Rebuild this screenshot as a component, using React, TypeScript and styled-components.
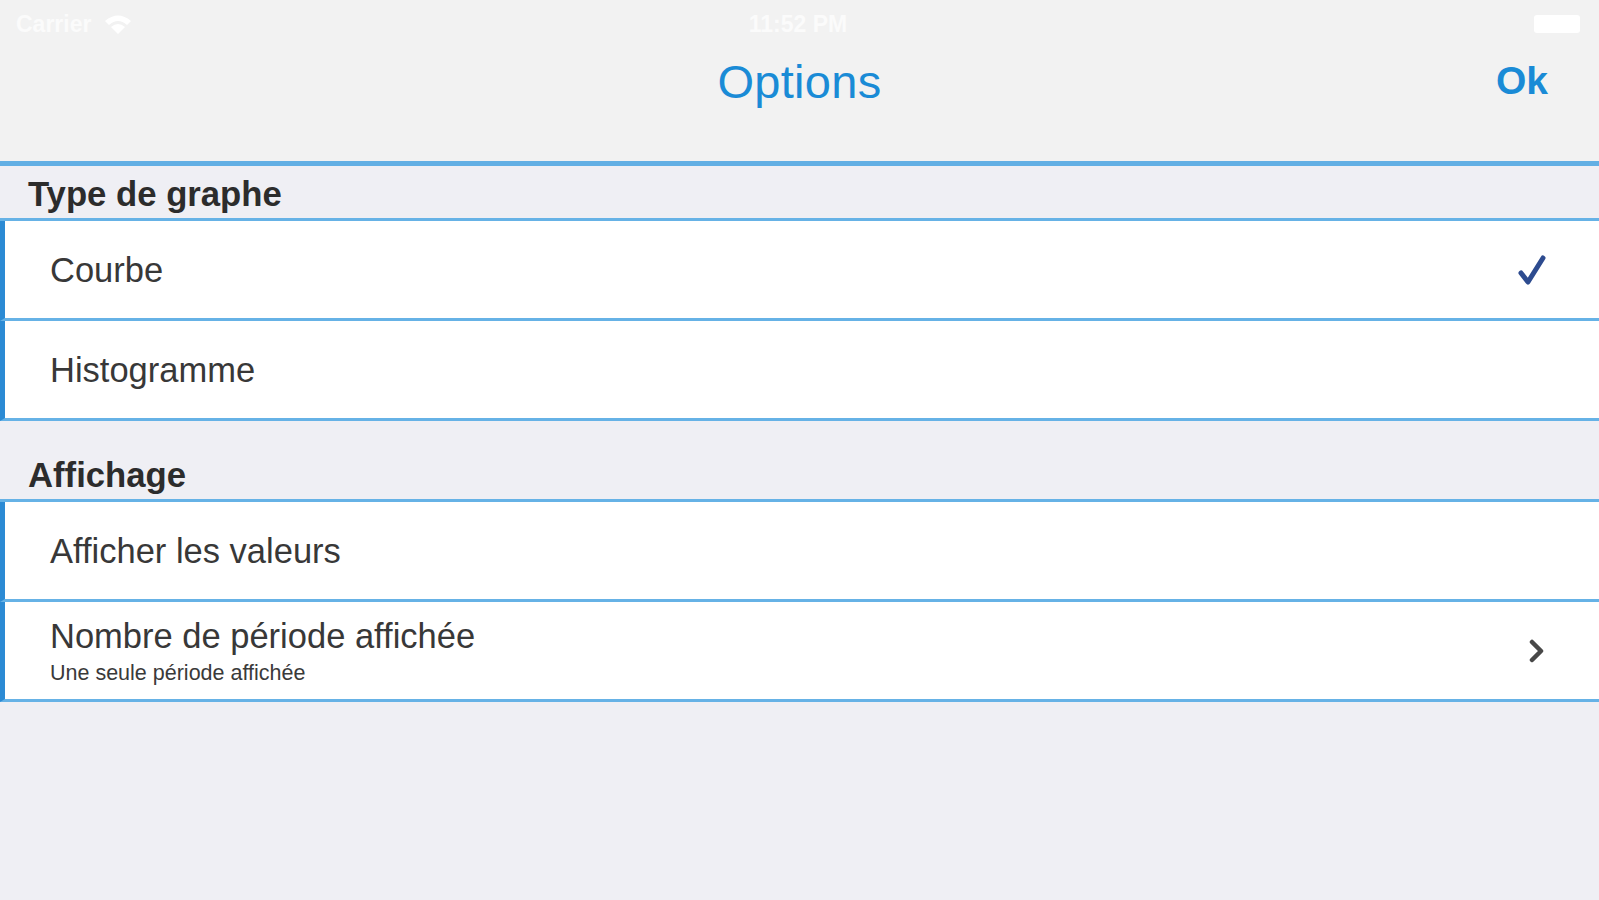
import * as React from 'react';
import styled, { createGlobalStyle } from 'styled-components';

const GlobalStyle = createGlobalStyle`
  html, body {
    margin: 0;
    padding: 0;
    background: #efeff4;
  }
  body {
    font-family: "Liberation Sans", Arial, Helvetica, sans-serif;
    -webkit-font-smoothing: antialiased;
  }
`;

const Page = styled.div`
  width: 100%;
  min-height: 900px;
  background: #efeff4;
  display: flex;
  flex-direction: column;
`;

const NavBar = styled.header`
  background: #f2f2f2;
  height: 161px;
  display: flex;
  flex-direction: column;
  border-bottom: 5px solid #62afe4;
`;

const StatusBar = styled.div`
  height: 48px;
  display: grid;
  grid-template-columns: 1fr auto 1fr;
  align-items: center;
  padding: 0 19px 0 16px;
  color: #fbfbfb;
  font-size: 23px;
  font-weight: bold;
`;

const Carrier = styled.div`
  display: flex;
  align-items: center;
  gap: 12px;
`;

const Battery = styled.div`
  justify-self: end;
  width: 46px;
  height: 18px;
  background: #ffffff;
  border-radius: 3px;
`;

const TitleBar = styled.div`
  height: 66px;
  display: grid;
  grid-template-columns: 1fr auto 1fr;
  align-items: center;
  padding: 0 51px;
`;

const Title = styled.h1`
  margin: 0;
  font-size: 47px;
  font-weight: normal;
  color: #1a8bd6;
  letter-spacing: 0.3px;
`;

const OkButton = styled.button`
  justify-self: end;
  background: none;
  border: none;
  padding: 0;
  font-family: inherit;
  font-size: 39px;
  font-weight: bold;
  color: #1a8bd6;
  cursor: pointer;
`;

const SectionHeader = styled.div<{ $height: number }>`
  height: ${p => p.$height}px;
  display: flex;
  align-items: flex-end;
  padding: 0 0 4px 28px;
  box-sizing: border-box;
  font-size: 34.7px;
  line-height: 40px;
  font-weight: bold;
  color: #2c2c2c;
`;

const RowList = styled.div`
  border-top: 3px solid #66b2e6;
`;

const Row = styled.div`
  height: 100px;
  box-sizing: border-box;
  background: #ffffff;
  border-left: 5px solid #2b8ad4;
  border-bottom: 3px solid #66b2e6;
  display: flex;
  align-items: center;
  justify-content: space-between;
  padding: 0 52px 0 45px;
`;

const RowText = styled.div`
  display: flex;
  flex-direction: column;
`;

const Label = styled.span`
  font-size: 34.5px;
  line-height: 40px;
  color: #383838;
`;

const SubLabel = styled.span`
  font-size: 21.5px;
  line-height: 26px;
  margin-top: 4px;
  color: #3a3a3a;
`;

const Check = () => (
  <svg width="30" height="34" viewBox="0 0 30 34">
    <path d="M4 20 L11 29 L26 5" fill="none" stroke="#2d4b8f" strokeWidth="5" strokeLinecap="round" strokeLinejoin="round" />
  </svg>
);

const Chevron = () => (
  <svg width="18" height="28" viewBox="0 0 18 28">
    <path d="M3 5 L12 14 L3 23" fill="none" stroke="#484848" strokeWidth="4.5" strokeLinecap="round" strokeLinejoin="round" />
  </svg>
);

const Wifi = () => (
  <svg width="30" height="22" viewBox="0 0 30 22">
    <path d="M2 8 Q15 -3 28 8 L24 12 Q15 4 6 12 Z" fill="#ffffff" />
    <path d="M8 14 Q15 8 22 14 L15 21 Z" fill="#ffffff" />
  </svg>
);

interface Item {
  label: string
  sub?: string
  accessory?: 'check' | 'chevron'
}

const sections: { title: string, height: number, items: Item[] }[] = [
  {
    title: 'Type de graphe',
    height: 52,
    items: [
      { label: 'Courbe', accessory: 'check' },
      { label: 'Histogramme' },
    ],
  },
  {
    title: 'Affichage',
    height: 78,
    items: [
      { label: 'Afficher les valeurs' },
      { label: 'Nombre de période affichée', sub: 'Une seule période affichée', accessory: 'chevron' },
    ],
  },
];

export default function App() {
  return (
    <>
      <GlobalStyle />
      <Page>
        <NavBar>
          <StatusBar>
            <Carrier>
              <span>Carrier</span>
              <Wifi />
            </Carrier>
            <span>11:52 PM</span>
            <Battery />
          </StatusBar>
          <TitleBar>
            <span />
            <Title>Options</Title>
            <OkButton>Ok</OkButton>
          </TitleBar>
        </NavBar>
        {sections.map(section => (
          <section key={section.title}>
            <SectionHeader $height={section.height}>{section.title}</SectionHeader>
            <RowList>
              {section.items.map(item => (
                <Row key={item.label}>
                  <RowText>
                    <Label>{item.label}</Label>
                    {item.sub && <SubLabel>{item.sub}</SubLabel>}
                  </RowText>
                  {item.accessory === 'check' && <Check />}
                  {item.accessory === 'chevron' && <Chevron />}
                </Row>
              ))}
            </RowList>
          </section>
        ))}
      </Page>
    </>
  );
}
